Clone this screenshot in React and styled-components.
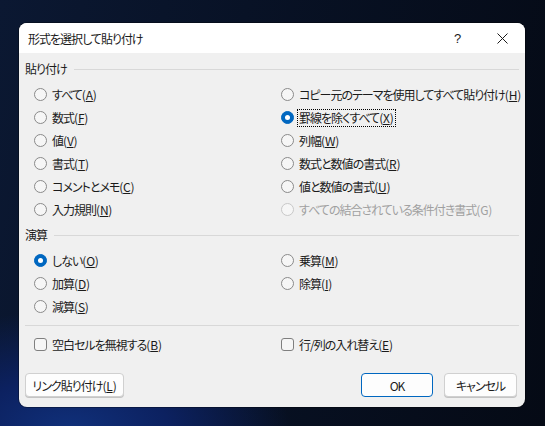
import styled, { createGlobalStyle } from 'styled-components';

const GlobalStyle = createGlobalStyle`
  html, body {
    margin: 0;
    padding: 0;
  }
  body {
    width: 545px;
    height: 426px;
    overflow: hidden;
    background:
      radial-gradient(ellipse 220px 120px at 70px 430px, #10307a 0%, #0c2160 45%, rgba(12, 33, 96, 0) 100%),
      linear-gradient(100deg, #0b1832 0%, #081226 40%, #050a15 100%);
    font-family: "Noto Sans CJK JP", "Noto Sans", sans-serif;
    font-feature-settings: "palt";
    letter-spacing: -1px;
    color: #1b1b1b;
  }
`;

const Dialog = styled.div`
  margin: 23px 0 0 19px;
  width: 506px;
  height: 384px;
  border-radius: 8px;
  overflow: hidden;
  background: #f0f0f0;
  display: flex;
  flex-direction: column;
  box-shadow: 0 0 0 1px rgba(0, 0, 0, 0.3);
`;

const TitleBar = styled.div`
  height: 30px;
  flex-shrink: 0;
  background: #ffffff;
  display: flex;
  align-items: center;
  padding-left: 9px;
  font-size: 12px;
`;

const Title = styled.div`
  flex: 1;
`;

const TitleButton = styled.div`
  width: 45px;
  height: 30px;
  display: flex;
  align-items: center;
  justify-content: center;
  font-family: "Liberation Sans", sans-serif;
  font-size: 13px;
  letter-spacing: 0;
`;

const Body = styled.div`
  flex: 1;
  display: flex;
  flex-direction: column;
  padding: 8px 6px 10px 6px;
  font-size: 12px;
`;

const GroupHeader = styled.div`
  display: flex;
  align-items: center;
  height: 16px;
  line-height: 16px;

  &::after {
    content: '';
    flex: 1;
    height: 1px;
    background: #d8d8d8;
    margin-left: 7px;
  }
`;

const OptionGrid = styled.div`
  display: grid;
  grid-template-columns: 247px 1fr;
  grid-auto-rows: 23px;
  padding-left: 9px;
  margin: ${(p) => (p.$flush ? 0 : 6)}px 0 ${(p) => p.$after ?? 6}px;
`;

const Row = styled.div`
  display: flex;
  align-items: center;
  gap: 5px;
  color: ${(p) => (p.$disabled ? '#a0a0a0' : '#1b1b1b')};
  white-space: nowrap;
`;

const Radio = styled.span`
  width: 13px;
  height: 13px;
  box-sizing: border-box;
  border-radius: 50%;
  flex-shrink: 0;
  border: 1px solid ${(p) => (p.$disabled ? '#c8c8c8' : p.$checked ? '#0067c0' : '#8a8a8a')};
  background: ${(p) => (p.$checked ? '#0067c0' : '#f6f6f6')};
  display: flex;
  align-items: center;
  justify-content: center;

  &::after {
    content: '';
    display: ${(p) => (p.$checked ? 'block' : 'none')};
    width: 5px;
    height: 5px;
    border-radius: 50%;
    background: #ffffff;
  }
`;

const Check = styled.span`
  width: 13px;
  height: 13px;
  box-sizing: border-box;
  border-radius: 3px;
  flex-shrink: 0;
  border: 1px solid #7f7f7f;
  background: #f6f6f6;
`;

const Label = styled.span`
  line-height: 16px;
  padding: 0 1px;
  margin-left: -1px;
  outline: ${(p) => (p.$focused ? '1px dotted #000' : 'none')};
`;

// (A) のようなアクセスキー部分は詰めない
const Accel = styled.span`
  letter-spacing: -0.2px;
`;

const Divider = styled.div`
  height: 1px;
  background: #d8d8d8;
  margin: 0 0 7px 0;
`;

const Footer = styled.div`
  margin-top: auto;
  display: flex;
  align-items: center;
  gap: 11px;
  padding-right: 2px;
`;

const Button = styled.button`
  height: 24px;
  width: ${(p) => p.$width}px;
  box-sizing: border-box;
  border-radius: 4px;
  background: #fdfdfd;
  border: 1px solid ${(p) => (p.$primary ? '#0067c0' : '#d0d0d0')};
  box-shadow: ${(p) => (p.$primary ? 'none' : '0 1px 0 #c4c4c4')};
  font-family: inherit;
  font-feature-settings: "palt";
  letter-spacing: -1px;
  font-size: 12px;
  color: #1b1b1b;
  padding: 0;
  display: flex;
  align-items: center;
  justify-content: center;

  &:first-child {
    margin-right: auto;
  }
`;

const Option = ({ text, accel, checked, disabled, focused, box }) => (
  <Row $disabled={disabled}>
    {box ? <Check /> : <Radio $checked={checked} $disabled={disabled} />}
    <Label $focused={focused}>
      {text}
      <Accel>
        (
        {disabled ? accel : <u>{accel}</u>})
      </Accel>
    </Label>
  </Row>
);

const CloseIcon = () => (
  <svg width="11" height="11" viewBox="0 0 11 11">
    <path d="M0.5 0.5 L10.5 10.5 M10.5 0.5 L0.5 10.5" stroke="#1b1b1b" strokeWidth="1" />
  </svg>
);

export default function App() {
  return (
    <>
      <GlobalStyle />
      <Dialog>
        <TitleBar>
          <Title>形式を選択して貼り付け</Title>
          <TitleButton>?</TitleButton>
          <TitleButton>
            <CloseIcon />
          </TitleButton>
        </TitleBar>
        <Body>
          <GroupHeader>貼り付け</GroupHeader>
          <OptionGrid>
            <Option text="すべて" accel="A" />
            <Option text="コピー元のテーマを使用してすべて貼り付け" accel="H" />
            <Option text="数式" accel="F" />
            <Option text="罫線を除くすべて" accel="X" checked focused />
            <Option text="値" accel="V" />
            <Option text="列幅" accel="W" />
            <Option text="書式" accel="T" />
            <Option text="数式と数値の書式" accel="R" />
            <Option text="コメントとメモ" accel="C" />
            <Option text="値と数値の書式" accel="U" />
            <Option text="入力規則" accel="N" />
            <Option text="すべての結合されている条件付き書式" accel="G" disabled />
          </OptionGrid>
          <GroupHeader>演算</GroupHeader>
          <OptionGrid $after={7}>
            <Option text="しない" accel="O" checked />
            <Option text="乗算" accel="M" />
            <Option text="加算" accel="D" />
            <Option text="除算" accel="I" />
            <Option text="減算" accel="S" />
          </OptionGrid>
          <Divider />
          <OptionGrid $flush $after={0}>
            <Option text="空白セルを無視する" accel="B" box />
            <Option text="行/列の入れ替え" accel="E" box />
          </OptionGrid>
          <Footer>
            <Button $width={99}>
              リンク貼り付け<Accel>(<u>L</u>)</Accel>
            </Button>
            <Button $width={72} $primary>
              OK
            </Button>
            <Button $width={73}>キャンセル</Button>
          </Footer>
        </Body>
      </Dialog>
    </>
  );
}
